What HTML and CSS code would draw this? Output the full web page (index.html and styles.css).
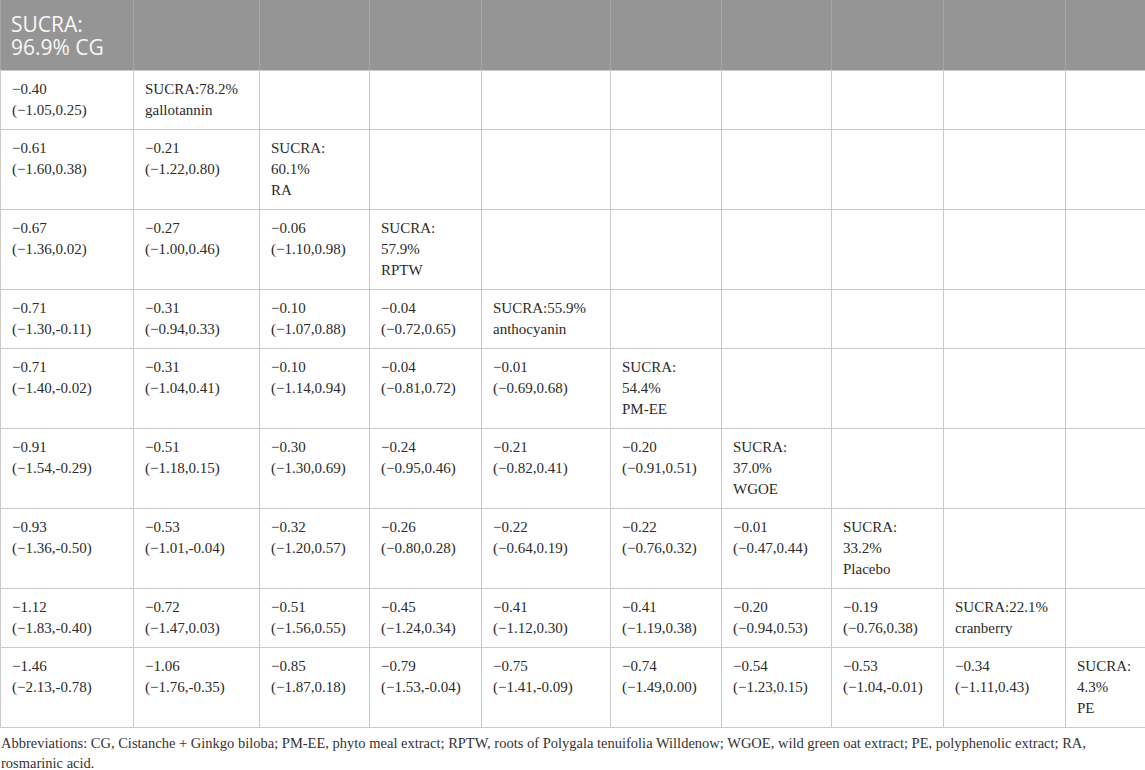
FILE: index.html
```html
<html>
    <head>
        <meta charset="UTF-8">
        <meta name="viewport" content="width=device-width, initial-scale=1.0">
        <title>SUCRA league table</title>
        <link rel="stylesheet" href="styles.css">
    </head>
    <body>
        <table class="league">
            <colgroup>
                <col class="c1"><col class="c2"><col class="c3"><col class="c4"><col class="c5">
                <col class="c6"><col class="c7"><col class="c8"><col class="c9"><col class="c10">
            </colgroup>
            <thead>
                <tr>
                    <th>SUCRA: 96.9% CG</th>
                    <th></th><th></th><th></th><th></th><th></th><th></th><th></th><th></th><th></th>
                </tr>
            </thead>
            <tbody>
                <tr>
                    <td>−0.40<br>(−1.05,0.25)</td>
                    <td>SUCRA:78.2%<br>gallotannin</td>
                    <td></td><td></td><td></td><td></td><td></td><td></td><td></td><td></td>
                </tr>
                <tr>
                    <td>−0.61<br>(−1.60,0.38)</td>
                    <td>−0.21<br>(−1.22,0.80)</td>
                    <td>SUCRA:<br>60.1%<br>RA</td>
                    <td></td><td></td><td></td><td></td><td></td><td></td><td></td>
                </tr>
                <tr>
                    <td>−0.67<br>(−1.36,0.02)</td>
                    <td>−0.27<br>(−1.00,0.46)</td>
                    <td>−0.06<br>(−1.10,0.98)</td>
                    <td>SUCRA:<br>57.9%<br>RPTW</td>
                    <td></td><td></td><td></td><td></td><td></td><td></td>
                </tr>
                <tr>
                    <td>−0.71<br>(−1.30,-0.11)</td>
                    <td>−0.31<br>(−0.94,0.33)</td>
                    <td>−0.10<br>(−1.07,0.88)</td>
                    <td>−0.04<br>(−0.72,0.65)</td>
                    <td>SUCRA:55.9%<br>anthocyanin</td>
                    <td></td><td></td><td></td><td></td><td></td>
                </tr>
                <tr>
                    <td>−0.71<br>(−1.40,-0.02)</td>
                    <td>−0.31<br>(−1.04,0.41)</td>
                    <td>−0.10<br>(−1.14,0.94)</td>
                    <td>−0.04<br>(−0.81,0.72)</td>
                    <td>−0.01<br>(−0.69,0.68)</td>
                    <td>SUCRA:<br>54.4%<br>PM-EE</td>
                    <td></td><td></td><td></td><td></td>
                </tr>
                <tr>
                    <td>−0.91<br>(−1.54,-0.29)</td>
                    <td>−0.51<br>(−1.18,0.15)</td>
                    <td>−0.30<br>(−1.30,0.69)</td>
                    <td>−0.24<br>(−0.95,0.46)</td>
                    <td>−0.21<br>(−0.82,0.41)</td>
                    <td>−0.20<br>(−0.91,0.51)</td>
                    <td>SUCRA:<br>37.0%<br>WGOE</td>
                    <td></td><td></td><td></td>
                </tr>
                <tr>
                    <td>−0.93<br>(−1.36,-0.50)</td>
                    <td>−0.53<br>(−1.01,-0.04)</td>
                    <td>−0.32<br>(−1.20,0.57)</td>
                    <td>−0.26<br>(−0.80,0.28)</td>
                    <td>−0.22<br>(−0.64,0.19)</td>
                    <td>−0.22<br>(−0.76,0.32)</td>
                    <td>−0.01<br>(−0.47,0.44)</td>
                    <td>SUCRA:<br>33.2%<br>Placebo</td>
                    <td></td><td></td>
                </tr>
                <tr>
                    <td>−1.12<br>(−1.83,-0.40)</td>
                    <td>−0.72<br>(−1.47,0.03)</td>
                    <td>−0.51<br>(−1.56,0.55)</td>
                    <td>−0.45<br>(−1.24,0.34)</td>
                    <td>−0.41<br>(−1.12,0.30)</td>
                    <td>−0.41<br>(−1.19,0.38)</td>
                    <td>−0.20<br>(−0.94,0.53)</td>
                    <td>−0.19<br>(−0.76,0.38)</td>
                    <td>SUCRA:22.1%<br>cranberry</td>
                    <td></td>
                </tr>
                <tr>
                    <td>−1.46<br>(−2.13,-0.78)</td>
                    <td>−1.06<br>(−1.76,-0.35)</td>
                    <td>−0.85<br>(−1.87,0.18)</td>
                    <td>−0.79<br>(−1.53,-0.04)</td>
                    <td>−0.75<br>(−1.41,-0.09)</td>
                    <td>−0.74<br>(−1.49,0.00)</td>
                    <td>−0.54<br>(−1.23,0.15)</td>
                    <td>−0.53<br>(−1.04,-0.01)</td>
                    <td>−0.34<br>(−1.11,0.43)</td>
                    <td>SUCRA:<br>4.3%<br>PE</td>
                </tr>
            </tbody>
        </table>
        <p class="note">Abbreviations: CG, Cistanche + Ginkgo biloba; PM-EE, phyto meal extract; RPTW, roots of Polygala tenuifolia Willdenow; WGOE, wild green oat extract; PE, polyphenolic extract; RA, rosmarinic acid.</p>
    </body>
</html>
```
FILE: styles.css
```css
body{
    margin: 0;
    padding: 0;
    background-color: #ffffff;
    font-family: "Liberation Serif", "Times New Roman", serif;
    color: #2b2b2b;
}
.league{
    width: 1145px;
    border-collapse: collapse;
    table-layout: fixed;
}
.c1{ width: 133px; }
.c2{ width: 126px; }
.c3{ width: 110px; }
.c4{ width: 112px; }
.c5{ width: 129px; }
.c6{ width: 111px; }
.c7{ width: 110px; }
.c8{ width: 112px; }
.c9{ width: 122px; }
.c10{ width: 80px; }
.league th{
    background-color: #959595;
    color: #f7f7f7;
    font-family: "Open Sans", sans-serif;
    font-weight: 400;
    font-size: 21px;
    line-height: 23px;
    text-align: left;
    vertical-align: top;
    padding: 13px 10px 11px 10px;
    border: 1px solid #a6a6a6;
    border-top: none;
    border-bottom: 1px solid #cbcbcb;
}
.league td{
    font-size: 15px;
    line-height: 21px;
    vertical-align: top;
    padding: 8px 11px 8px 11px;
    border: 1px solid #cbcbcb;
}
.note{
    margin: 5px 0 0 1px;
    font-size: 14.5px;
    line-height: 20px;
    color: #333333;
}
```
